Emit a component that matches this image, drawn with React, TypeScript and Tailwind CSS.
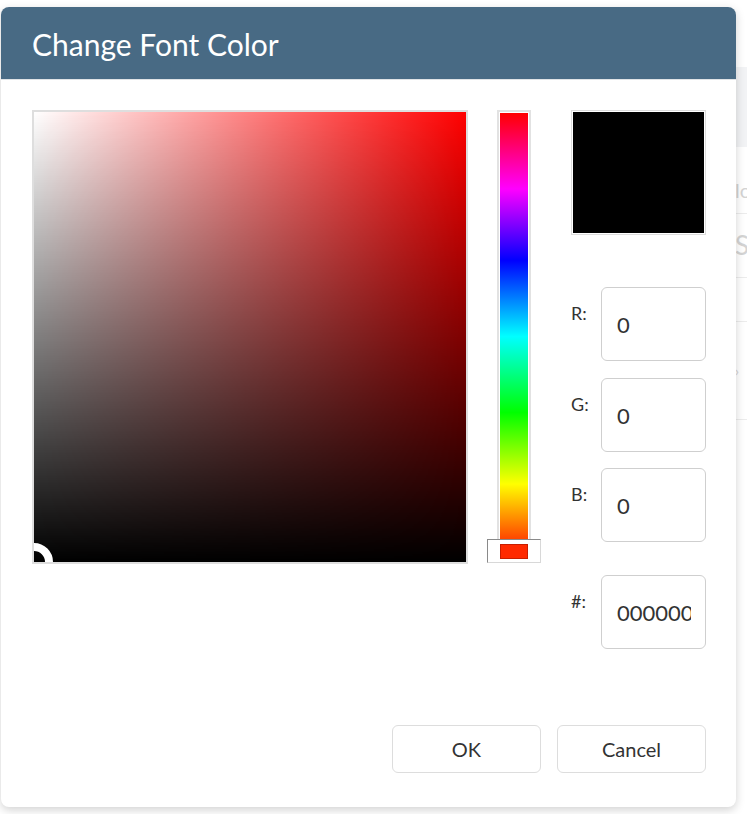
import React from 'react';

const font = { fontFamily: 'Lato, "Noto Sans", sans-serif' };

const ChannelRow: React.FC<{ label: string; value: string; className?: string }> = ({ label, value, className }) => (
  <div className={`flex items-start ${className ?? ''}`}>
    <span className="w-[30px] pt-[15px] text-[18px] leading-[22px] text-[#333]">{label}</span>
    <input
      readOnly
      value={value}
      className="w-[105px] h-[74px] rounded-[6px] border border-[#cfcfcf] bg-white pl-[15px] pr-[14px] text-[22px] text-[#333] outline-none"
      style={font}
    />
  </div>
);

const App: React.FC = () => {
  return (
    <div className="relative w-[747px] h-[814px] overflow-hidden bg-white" style={font}>
      {/* faded page behind the dialog */}
      <div className="flex h-full">
        <div className="w-[735px] shrink-0" />
        <div className="flex-1 flex flex-col text-[#d4d4d4] text-[20px]">
          <div className="h-[67px]" />
          <div className="h-[80px] bg-[#f2f3f5]" />
          <div className="h-[67px] border-b border-[#ececec] flex items-end pb-[8px]">lo</div>
          <div className="h-[64px] border-b border-[#ececec] flex items-center text-[26px]">S</div>
          <div className="h-[44px] border-b border-[#ececec]" />
          <div className="h-[98px] border-b border-[#ececec] flex items-center text-[14px]">›</div>
        </div>
      </div>

      {/* dialog */}
      <div className="absolute left-[1px] top-[7px] w-[735px] h-[800px] rounded-[8px] bg-white shadow-[0_3px_10px_rgba(0,0,0,0.18)] flex flex-col">
        <div className="h-[73px] rounded-t-[8px] bg-[#486a84] border-b border-[#dfe3e6] flex items-center px-[31px]">
          <h1 className="text-[30px] text-white leading-none pt-[2px]">Change Font Color</h1>
        </div>

        <div className="flex flex-col pl-[31px] pr-[30px] pt-[30px] pb-[34px] flex-1">
          <div className="flex">
            {/* saturation / value area */}
            <div className="relative w-[438px] h-[454px] border-2 border-[#dedede] overflow-hidden">
              <div className="w-full h-full bg-[linear-gradient(to_top,#000,rgba(0,0,0,0)),linear-gradient(to_right,#fff,#f00)]" />
              <div className="absolute left-[-19px] bottom-[-19px] w-[38px] h-[38px] rounded-full border-[8px] border-white" />
            </div>

            {/* hue slider */}
            <div className="relative ml-[29px] w-[34px] h-[453px] border-2 border-[#e2e2e2] bg-white p-[1px]">
              <div className="w-full h-full bg-[linear-gradient(to_bottom,#f00,#f0f_17%,#00f_33%,#0ff_50%,#0f0_67%,#ff0_83%,#f00)]" />
              <div className="absolute left-[-12px] top-[427px] w-[54px] h-[24px] border border-t-[#8a8a8a] border-l-[#8a8a8a] border-r-[#d8d8d8] border-b-[#d8d8d8] bg-white flex items-center justify-center">
                <div className="w-[28px] h-[15px] bg-[#ff2a00] border border-[#c81e00]" />
              </div>
            </div>

            {/* preview + channels */}
            <div className="ml-[40px] w-[135px] flex flex-col">
              <div className="w-[135px] h-[125px] border border-[#dcdcdc] p-[1px] bg-white">
                <div className="w-full h-full bg-black" />
              </div>
              <ChannelRow label="R:" value="0" className="mt-[52px]" />
              <ChannelRow label="G:" value="0" className="mt-[17px]" />
              <ChannelRow label="B:" value="0" className="mt-[16px]" />
              <ChannelRow label="#:" value="000000" className="mt-[33px]" />
            </div>
          </div>

          <div className="mt-auto flex justify-end gap-[16px]">
            <button className="w-[149px] h-[48px] rounded-[6px] border border-[#dddddd] bg-white text-[20px] text-[#333]" style={font}>
              OK
            </button>
            <button className="w-[149px] h-[48px] rounded-[6px] border border-[#dddddd] bg-white text-[20px] text-[#333]" style={font}>
              Cancel
            </button>
          </div>
        </div>
      </div>
    </div>
  );
};

export default App;
